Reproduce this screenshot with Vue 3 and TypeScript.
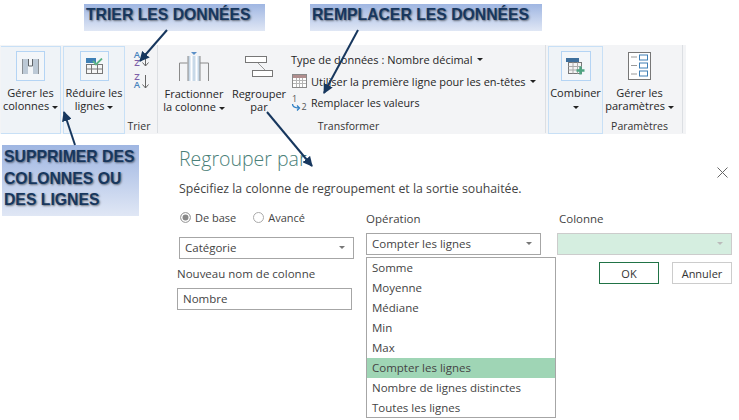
<script setup lang="ts">
const operations = [
  "Somme",
  "Moyenne",
  "Médiane",
  "Min",
  "Max",
  "Compter les lignes",
  "Nombre de lignes distinctes",
  "Toutes les lignes",
];
const selected = "Compter les lignes";

const arrows = [
  { x1: 167, y1: 30, x2: 140, y2: 61 },
  { x1: 358, y1: 30, x2: 324, y2: 93 },
  { x1: 267, y1: 112, x2: 312, y2: 166 },
  { x1: 75, y1: 145, x2: 64, y2: 112 },
];
</script>

<template>
  <div class="page">
    <div class="ribbon">
      <div class="hot-btn first">
        <div class="icon-box">
          <svg width="17" height="15" viewBox="0 0 17 15">
            <rect x="1" y="0" width="5" height="15" fill="#bcc9d6" />
            <rect x="11" y="0" width="5" height="15" fill="#bcc9d6" />
            <path d="M.5 0v15M16.500 0v15" stroke="#8a8f94" fill="none" />
            <path d="M6.500 0v7h4V0" stroke="#5f6468" fill="none" />
          </svg>
        </div>
        <div class="btn-label">Gérer les<br />colonnes <i class="caret"></i></div>
      </div>
      <div class="hot-btn second">
        <div class="icon-box">
          <svg width="17" height="16" viewBox="0 0 17 16">
            <rect x="0" y="0" width="10" height="5" fill="#3f7fb5" />
            <rect x=".5" y="6.500" width="16" height="9" fill="#f6f6f6" stroke="#777" />
            <path d="M.5 11h16M5.500 6.500v9M11.500 6.500v9" stroke="#777" />
            <path d="M7 3l3 3.500 6-6" stroke="#5cb585" stroke-width="1.800" fill="none" />
          </svg>
        </div>
        <div class="btn-label">Réduire les<br />lignes <i class="caret"></i></div>
      </div>

      <div class="group sort-group">
        <div class="sort-icons">
          <div class="sort-row">
            <div class="sort-letters"><span class="blue">A</span><span class="purple">Z</span></div>
            <svg width="7" height="15" viewBox="0 0 7 15"><path d="M3.500 1v13M.5 10.500l3 3.500 3-3.500" stroke="#666" fill="none" /></svg>
          </div>
          <div class="sort-row">
            <div class="sort-letters"><span class="purple">Z</span><span class="blue">A</span></div>
            <svg width="7" height="15" viewBox="0 0 7 15"><path d="M3.500 1v13M.5 10.500l3 3.500 3-3.500" stroke="#666" fill="none" /></svg>
          </div>
        </div>
        <div class="group-name trier-name">Trier</div>
      </div>

      <div class="group transform-group">
        <div class="group-body">
          <div class="plain-btn split-btn">
            <svg class="plain-icon" width="30" height="30" viewBox="0 0 30 30">
              <path d="M12 0h6l-3 3z" fill="#5b8fc7" />
              <rect x="9" y="4" width="12" height="25" fill="#c8d9e8" />
              <path d="M12.500 4v25M17.500 4v25" stroke="#fff" stroke-width="2" />
              <path d="M.5 29V11h8M21 11h8.500v18M9 4v25M21 4v25" stroke="#8a8a8a" fill="none" />
            </svg>
            <div class="btn-label">Fractionner<br />la colonne <i class="caret"></i></div>
          </div>
          <div class="plain-btn group-btn">
            <svg class="plain-icon" width="30" height="30" viewBox="0 0 30 30">
              <rect x="1.500" y="4.500" width="21" height="6" fill="#fff" stroke="#777" />
              <rect x="8.500" y="18.500" width="20" height="6" fill="#fff" stroke="#777" />
              <path d="M14 11l7 7" stroke="#999" />
            </svg>
            <div class="btn-label">Regrouper<br />par</div>
          </div>
          <div class="stack">
            <div class="stack-row">Type de données : Nombre décimal <i class="caret"></i></div>
            <div class="stack-row">
              <svg class="tbl-icon" width="15" height="14" viewBox="0 0 15 14">
                <rect x=".5" y=".5" width="14" height="13" fill="#fff" stroke="#8a8a8a" />
                <rect x="1" y="1" width="13" height="3" fill="#b08e8e" />
                <path d="M1 6.500h13M1 9.500h13M4.500 4v9M7.500 4v9M10.500 4v9" stroke="#b5b5b5" />
              </svg>
              Utiliser la première ligne pour les en-têtes <i class="caret"></i>
            </div>
            <div class="stack-row replace-row">
              <svg class="replace-icon" width="16" height="20" viewBox="0 0 16 20">
                <text x="1" y="9" class="mini-num">1</text>
                <text x="10.500" y="17" class="mini-num">2</text>
                <path d="M1.500 11c0 3 2 4 7 4M6 12.500L8.500 15 6 17.500" stroke="#2f7fc4" stroke-width="1.300" fill="none" />
              </svg>
              Remplacer les valeurs
            </div>
          </div>
        </div>
        <div class="group-name transform-name">Transformer</div>
      </div>

      <div class="hot-btn combine">
        <div class="icon-box wide">
          <svg width="19" height="17" viewBox="0 0 19 17">
            <rect x="0" y="0" width="13" height="4" fill="#3e6f9c" />
            <rect x="2.500" y="4.500" width="13" height="11" fill="#f4f4f4" stroke="#777" />
            <path d="M2.500 8.500h13M2.500 12h13M7 4.500v11M11.500 4.500v11" stroke="#aaa" />
            <path d="M14.500 8.500v8M10.500 12.500h8" stroke="#4fa582" stroke-width="2.500" />
          </svg>
        </div>
        <div class="btn-label">Combiner<br /><i class="caret"></i></div>
      </div>

      <div class="group param-group">
        <svg class="plain-icon" width="24" height="29" viewBox="0 0 24 29">
          <rect x=".5" y=".5" width="22" height="27" fill="#fff" stroke="#777" />
          <path d="M3 5h6M3 13.500h6M3 22h6" stroke="#999" />
          <rect x="11.500" y="3" width="8" height="5" fill="none" stroke="#3f7fb5" />
          <rect x="11.500" y="11" width="8" height="5" fill="none" stroke="#3f7fb5" />
          <rect x="11.500" y="19" width="8" height="5" fill="none" stroke="#3f7fb5" />
        </svg>
        <div class="btn-label">Gérer les<br />paramètres <i class="caret"></i></div>
        <div class="group-name param-name">Paramètres</div>
      </div>
    </div>

    <div class="dialog">
      <h1 class="title">Regrouper par</h1>
      <p class="subtitle">Spécifiez la colonne de regroupement et la sortie souhaitée.</p>
      <svg class="close" width="11" height="11" viewBox="0 0 11 11">
        <path d="M.5.500l10 10M10.500.500l-10 10" stroke="#666" fill="none" />
      </svg>

      <div class="form-grid">
        <div class="radios">
          <span class="radio on"></span><span class="radio-text">De base</span>
          <span class="radio"></span><span>Avancé</span>
        </div>
        <div class="field-label">Opération</div>
        <div class="field-label col-label">Colonne</div>

        <div class="select category">Catégorie<i class="select-caret"></i></div>
        <div class="select-wrap">
          <div class="select">Compter les lignes<i class="select-caret"></i></div>
          <ul class="menu">
            <li v-for="op in operations" :key="op" :class="{ active: op === selected }">{{ op }}</li>
          </ul>
        </div>
        <div class="select disabled"><i class="select-caret"></i></div>

        <div class="name-block">
          <div class="name-label">Nouveau nom de colonne</div>
          <div class="name-input">Nombre</div>
        </div>
        <div></div>
        <div class="actions">
          <button class="ok">OK</button>
          <button class="cancel">Annuler</button>
        </div>
      </div>
    </div>

    <div class="callout trier">TRIER LES DONNÉES</div>
    <div class="callout remplacer">REMPLACER LES DONNÉES</div>
    <div class="callout supprimer">SUPPRIMER DES<br />COLONNES OU<br />DES LIGNES</div>

    <svg class="arrows" width="739" height="420" viewBox="0 0 739 420">
      <defs>
        <marker id="head" markerWidth="5" markerHeight="5" refX="4.500" refY="2.500" orient="auto">
          <path d="M0 0L5 2.500L0 5z" fill="#17375e" />
        </marker>
      </defs>
      <line
        v-for="(a, i) in arrows"
        :key="i"
        :x1="a.x1"
        :y1="a.y1"
        :x2="a.x2"
        :y2="a.y2"
        stroke="#17375e"
        stroke-width="2"
        marker-end="url(#head)"
      />
    </svg>
  </div>
</template>

<style>
html,
body {
  margin: 0;
  background: #fff;
}
</style>

<style scoped>
.page {
  position: relative;
  width: 739px;
  height: 420px;
  overflow: hidden;
  padding-top: 45px;
  box-sizing: border-box;
  background: #fff;
  font-family: "Open Sans", "Noto Sans", sans-serif;
  font-size: 11px;
  color: #444;
}

.ribbon {
  display: flex;
  width: 686px;
  height: 89px;
  padding-left: 1px;
  box-sizing: border-box;
  background: #f3f4f6;
  color: #262626;
}

.hot-btn {
  display: flex;
  flex-direction: column;
  align-items: center;
  height: 88px;
  margin-top: 1px;
  box-sizing: border-box;
  border: 1px solid #c8e0f6;
  background: #eff3f7;
  padding-top: 4px;
}

.first {
  width: 60px;
  border-left: none;
  margin-right: 2px;
}

.second {
  width: 62px;
}

.combine {
  width: 55px;
  margin-left: 2px;
}

.icon-box {
  display: flex;
  align-items: center;
  justify-content: center;
  width: 29px;
  height: 30px;
  box-sizing: border-box;
  border: 1px solid #b4d4f4;
  background: #f3f6f9;
}

.icon-box.wide {
  width: 30px;
}

.btn-label {
  margin-top: 5px;
  text-align: center;
  line-height: 13px;
  white-space: nowrap;
}

.caret {
  display: inline-block;
  vertical-align: middle;
  width: 0;
  height: 0;
  border-left: 3px solid transparent;
  border-right: 3px solid transparent;
  border-top: 3px solid #222;
}

.group {
  display: flex;
  flex-direction: column;
  position: relative;
  box-sizing: border-box;
  border-right: 1px solid #dcdfe3;
  height: 88px;
}

.group-name {
  position: absolute;
  left: 0;
  right: 0;
  bottom: 0;
  text-align: center;
  font-size: 10.500px;
  line-height: 14px;
  color: #333;
}

.trier-name {
  right: 4px;
}

.transform-name {
  right: 8px;
}

.param-name {
  right: 6px;
}

.sort-group {
  width: 33px;
}

.sort-icons {
  display: flex;
  flex-direction: column;
  gap: 6px;
  margin: 6px 0 0 8px;
}

.sort-row {
  display: flex;
  align-items: center;
  gap: 1px;
}

.sort-letters {
  display: flex;
  flex-direction: column;
  width: 8px;
  font-size: 9.500px;
  font-weight: 600;
  line-height: 8px;
  text-align: center;
}

.blue {
  color: #4a85bd;
}

.purple {
  color: #7f5fa8;
}

.transform-group {
  width: 386px;
  margin-left: 2px;
}

.group-body {
  display: flex;
}

.plain-btn {
  display: flex;
  flex-direction: column;
  align-items: center;
  padding-top: 7px;
}

.plain-icon {
  display: block;
}

.split-btn {
  width: 68px;
}

.group-btn {
  width: 62px;
}

.stack {
  display: flex;
  flex-direction: column;
  margin-left: 1px;
  padding-top: 3px;
}

.stack-row {
  display: flex;
  align-items: center;
  gap: 4px;
  height: 22px;
  white-space: nowrap;
}

.tbl-icon {
  margin-left: 1px;
}

.replace-row {
  font-size: 10.700px;
}

.replace-icon {
  overflow: visible;
}

.mini-num {
  font-size: 9px;
  fill: #555;
}

.param-group {
  align-items: center;
  width: 80px;
  padding: 7px 6px 0 0;
}

.dialog {
  position: relative;
  padding: 12px 0 0 179px;
}

.title {
  margin: 0;
  font-size: 19.500px;
  font-weight: 300;
  line-height: 26px;
  color: #4a8078;
}

.subtitle {
  margin: 9px 0 0;
  font-size: 12.300px;
  line-height: 16px;
}

.close {
  position: absolute;
  left: 717px;
  top: 33px;
}

.form-grid {
  display: grid;
  grid-template-columns: 175px 175px 175px;
  grid-template-rows: 25px 22px auto;
  column-gap: 12px;
  margin-top: 11px;
}

.radios {
  display: flex;
  align-items: center;
  align-self: start;
  height: 18px;
  padding-left: 1px;
}

.radio {
  width: 9px;
  height: 9px;
  border: 1px solid #aaa;
  border-radius: 50%;
  margin-right: 4px;
  background: #fff;
}

.radio.on {
  background: #888;
  box-shadow: inset 0 0 0 1.500px #fff;
}

.radio-text {
  margin-right: 17px;
}

.field-label {
  font-size: 11.500px;
  line-height: 22px;
}

.col-label {
  margin-left: 6px;
}

.select {
  position: relative;
  height: 22px;
  box-sizing: border-box;
  border: 1px solid #a6a6a6;
  padding-left: 5px;
  font-size: 11.500px;
  line-height: 20px;
  background: #fff;
}

.select.category {
  margin-top: 4px;
}

.select-wrap {
  position: relative;
}

.select-caret {
  position: absolute;
  right: 8px;
  top: 8px;
  width: 0;
  height: 0;
  border-left: 3px solid transparent;
  border-right: 3px solid transparent;
  border-top: 3px solid #777;
}

.select.disabled {
  margin-left: 4px;
  margin-right: -4px;
  border-color: #ccc;
  background: #d5eee0;
}

.select.disabled .select-caret {
  border-top-color: #bbb;
}

.menu {
  position: absolute;
  left: 0;
  top: 24px;
  width: 190px;
  height: 161px;
  margin: 0;
  padding: 0;
  box-sizing: border-box;
  list-style: none;
  border: 1px solid #a6a6a6;
  background: #fff;
  z-index: 1;
}

.menu li {
  height: 20px;
  padding-left: 5px;
  font-size: 11.500px;
  line-height: 20px;
}

.menu li.active {
  background: #9fd5b5;
}

.name-block {
  margin: 0 2px 0 -2px;
  padding-top: 11px;
}

.name-label {
  font-size: 11.500px;
  line-height: 16px;
}

.name-input {
  height: 22px;
  margin-top: 6px;
  box-sizing: border-box;
  border: 1px solid #a6a6a6;
  padding-left: 5px;
  font-size: 11.500px;
  line-height: 20px;
}

.actions {
  display: flex;
  justify-content: flex-end;
  gap: 13px;
  margin-right: -4px;
  padding-top: 7px;
}

.actions button {
  height: 22px;
  padding: 0;
  background: #fff;
  font-family: inherit;
  font-size: 11px;
  color: #333;
}

.ok {
  width: 60px;
  border: 1px solid #217346;
}

.cancel {
  width: 60px;
  border: 1px solid #ccc;
}

.callout {
  position: absolute;
  box-sizing: border-box;
  background: linear-gradient(#9fb6e2, #e0e7f5);
  font-family: "Liberation Sans", sans-serif;
  font-weight: 700;
  font-size: 15.750px;
  color: #17375e;
  text-shadow: 1px 1px 2px rgba(0, 0, 0, 0.5);
  white-space: nowrap;
}

.trier {
  left: 84px;
  top: 4px;
  width: 181px;
  height: 27px;
  padding: 2px 0 0 2px;
}

.remplacer {
  left: 310px;
  top: 4px;
  width: 232px;
  height: 27px;
  padding: 2px 0 0 2px;
}

.supprimer {
  left: 2px;
  top: 145px;
  width: 137px;
  height: 71px;
  padding: 1px 0 0 2px;
  line-height: 21.500px;
}

.arrows {
  position: absolute;
  left: 0;
  top: 0;
  pointer-events: none;
}
</style>
